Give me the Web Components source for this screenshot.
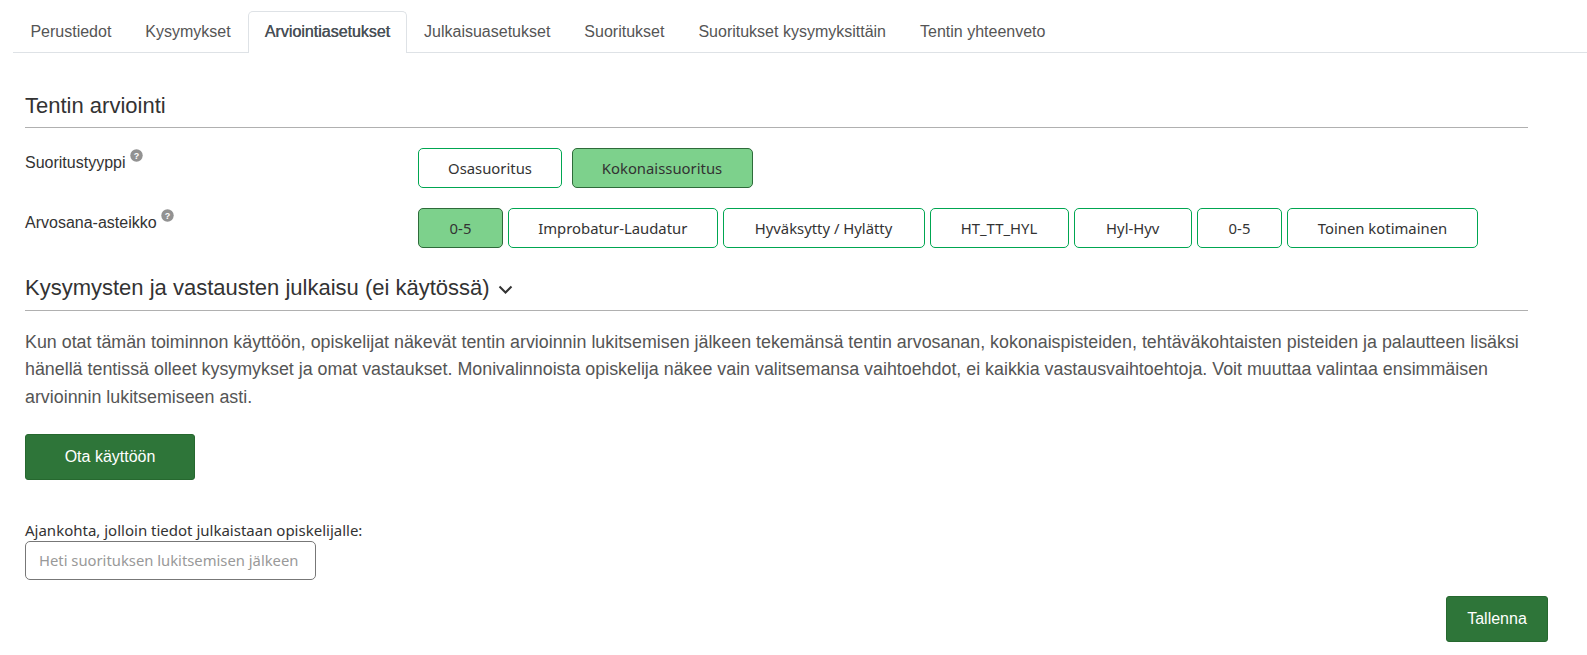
<!DOCTYPE html>
<html>
<head>
<meta charset="utf-8">
<title>Arviointiasetukset</title>
<style>
  html, body { margin: 0; background: #fff; }
  body { font-family: "Liberation Sans", Arial, sans-serif; color: #333; }
</style>
</head>
<body>
<exam-page></exam-page>
<script>
class TabBar extends HTMLElement {
  constructor() {
    super();
    this.attachShadow({ mode: "open" });
  }

  connectedCallback() {
    const active = this.getAttribute("active");
    const tabs = this.getAttribute("tabs").split("|");
    this.shadowRoot.innerHTML = `
      <style>
        :host {
          display: flex;
          margin: 11px 0 0 13px;
          padding-left: 0.4px;
          height: 41px;
          border-bottom: 1px solid #dee2e6;
          font: 16px "Liberation Sans", Arial, sans-serif;
        }
        .tab {
          box-sizing: border-box;
          height: 42px;
          padding: 11px 16px 0;
          color: #555;
          border: 1px solid transparent;
          border-bottom: none;
          white-space: nowrap;
        }
        .tab.active {
          color: #495057;
          text-shadow: 0.4px 0 0 #495057;
          background: #fff;
          border-color: #dee2e6;
          border-radius: 5px 5px 0 0;
        }
      </style>
      ${tabs
        .map((t) => `<div class="tab ${t === active ? "active" : ""}">${t}</div>`)
        .join("")}
    `;
  }
}

class SectionTitle extends HTMLElement {
  constructor() {
    super();
    this.attachShadow({ mode: "open" });
  }

  connectedCallback() {
    this.shadowRoot.innerHTML = `
      <style>
        :host {
          display: flex;
          align-items: center;
          gap: 8px;
          padding-bottom: 7px;
          border-bottom: 1px solid #b0b0b0;
          font: 22px/30px "Liberation Sans", Arial, sans-serif;
          color: #333;
        }
        svg { display: block; margin-top: 2px; }
      </style>
      <slot></slot>
      ${
        this.hasAttribute("chevron")
          ? `<svg width="15" height="9" viewBox="0 0 15 9"><path d="M1.5 1.5 7.5 7.5l6-6" fill="none" stroke="#333" stroke-width="2"/></svg>`
          : ""
      }
    `;
  }
}

class HelpIcon extends HTMLElement {
  constructor() {
    super();
    this.attachShadow({ mode: "open" });
    this.shadowRoot.innerHTML = `
      <style>
        :host { display: inline-block; width: 13px; height: 13px; vertical-align: 6px; }
        svg { display: block; }
        text { font: bold 9px "Liberation Sans", Arial, sans-serif; fill: #fff; }
      </style>
      <svg width="13" height="13" viewBox="0 0 13 13">
        <circle cx="6.5" cy="6.5" r="6.2" fill="#929292"/>
        <text x="6.5" y="9.7" text-anchor="middle">?</text>
      </svg>
    `;
  }
}

class ChoiceGroup extends HTMLElement {
  constructor() {
    super();
    this.attachShadow({ mode: "open" });
  }

  connectedCallback() {
    const selected = Number(this.getAttribute("selected"));
    const options = this.getAttribute("options").split("|");
    const widths = this.getAttribute("widths").split("|");
    const gap = this.getAttribute("gap") || "5";
    this.shadowRoot.innerHTML = `
      <style>
        :host { display: flex; gap: ${gap}px; }
        .opt {
          box-sizing: border-box;
          height: 40px;
          display: flex;
          align-items: center;
          justify-content: center;
          background: #fff;
          border: 1px solid #00a651;
          border-radius: 5px;
          font: 14.85px "Noto Sans", sans-serif;
          color: #333;
          white-space: nowrap;
        }
        .opt.on {
          background: #7dd18c;
          border-color: #2e6b3a;
        }
      </style>
      ${options
        .map(
          (o, i) =>
            `<div class="opt ${i === selected ? "on" : ""}" style="width:${widths[i]}px">${o}</div>`
        )
        .join("")}
    `;
  }
}

class FormRow extends HTMLElement {
  constructor() {
    super();
    this.attachShadow({ mode: "open" });
    this.shadowRoot.innerHTML = `
      <style>
        :host {
          display: grid;
          grid-template-columns: 393px 1fr;
          font: 16px "Liberation Sans", Arial, sans-serif;
          color: #333;
        }
        .label { padding-top: 1px; }
      </style>
      <div class="label"><slot name="label"></slot></div>
      <div><slot></slot></div>
    `;
  }
}

class PrimaryButton extends HTMLElement {
  constructor() {
    super();
    this.attachShadow({ mode: "open" });
    this.shadowRoot.innerHTML = `
      <style>
        :host {
          display: inline-flex;
          box-sizing: border-box;
          align-items: center;
          justify-content: center;
          height: 46px;
          padding: 0 20px;
          background: #2e7539;
          border: 1px solid #26682f;
          border-radius: 3px;
          color: #fff;
          font: 16px "Liberation Sans", Arial, sans-serif;
        }
      </style>
      <slot></slot>
    `;
  }
}

class ExamPage extends HTMLElement {
  constructor() {
    super();
    this.attachShadow({ mode: "open" });
    this.shadowRoot.innerHTML = `
      <style>
        :host { display: block; height: 655px; overflow: hidden; }
        .content { padding: 38px 59px 0 25px; }
        .first { padding-bottom: 6px; }
        form-row { margin-top: 20px; }
        .second { margin-top: 25px; }
        p {
          margin: 18px 0 0;
          font: 17.85px/27.3px "Liberation Sans", Arial, sans-serif;
          color: #555;
        }
        .enable { width: 170px; margin-top: 23px; display: flex; }
        .field-label {
          margin-top: 40px;
          font: 15px/21px "Noto Sans", sans-serif;
          color: #333;
        }
        .input {
          box-sizing: border-box;
          width: 291px;
          height: 39px;
          padding: 0 13px;
          display: flex;
          align-items: center;
          border: 1px solid #777;
          border-radius: 5px;
          font: 14.8px "Noto Sans", sans-serif;
          color: #999;
          white-space: nowrap;
        }
        .save-row { display: flex; justify-content: flex-end; padding-right: 39px; margin-top: 16px; }
        .save-row primary-button { width: 102px; }
      </style>
      <tab-bar
        active="Arviointiasetukset"
        tabs="Perustiedot|Kysymykset|Arviointiasetukset|Julkaisuasetukset|Suoritukset|Suoritukset kysymyksittäin|Tentin yhteenveto"
      ></tab-bar>
      <div class="content">
        <section-title class="first">Tentin arviointi</section-title>
        <form-row>
          <span slot="label">Suoritustyyppi <help-icon></help-icon></span>
          <choice-group selected="1" gap="9.5" widths="144|181" options="Osasuoritus|Kokonaissuoritus"></choice-group>
        </form-row>
        <form-row>
          <span slot="label">Arvosana-asteikko <help-icon></help-icon></span>
          <choice-group selected="0" widths="85|209.5|202|139|118.5|85|191" options="0-5|Improbatur-Laudatur|Hyväksytty / Hylätty|HT_TT_HYL|Hyl-Hyv|0-5|Toinen kotimainen"></choice-group>
        </form-row>
        <section-title chevron class="second">Kysymysten ja vastausten julkaisu (ei käytössä)</section-title>
        <p>Kun otat tämän toiminnon käyttöön, opiskelijat näkevät tentin arvioinnin lukitsemisen jälkeen tekemänsä tentin arvosanan, kokonaispisteiden, tehtäväkohtaisten pisteiden ja palautteen lisäksi hänellä tentissä olleet kysymykset ja omat vastaukset. Monivalinnoista opiskelija näkee vain valitsemansa vaihtoehdot, ei kaikkia vastausvaihtoehtoja. Voit muuttaa valintaa ensimmäisen arvioinnin lukitsemiseen asti.</p>
        <primary-button class="enable">Ota käyttöön</primary-button>
        <div class="field-label">Ajankohta, jolloin tiedot julkaistaan opiskelijalle:</div>
        <div class="input">Heti suorituksen lukitsemisen jälkeen</div>
      </div>
      <div class="save-row"><primary-button>Tallenna</primary-button></div>
    `;
  }
}

customElements.define("tab-bar", TabBar);
customElements.define("section-title", SectionTitle);
customElements.define("help-icon", HelpIcon);
customElements.define("choice-group", ChoiceGroup);
customElements.define("form-row", FormRow);
customElements.define("primary-button", PrimaryButton);
customElements.define("exam-page", ExamPage);
</script>
</body>
</html>
